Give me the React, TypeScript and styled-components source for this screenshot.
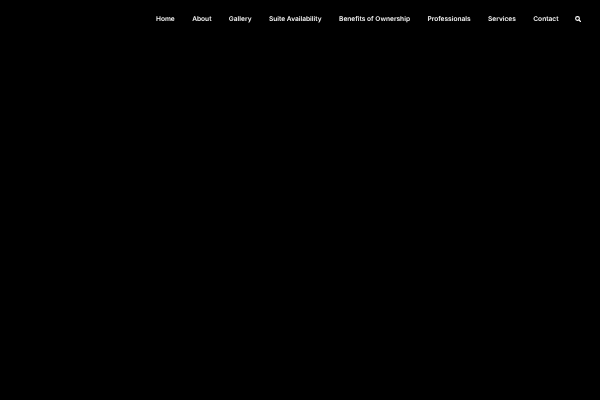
import React from "react";
import styled, { createGlobalStyle } from "styled-components";

const Global = createGlobalStyle`
  html, body { margin: 0; height: 100%; background: #000; }
  #root { height: 100%; }
`;

const Page = styled.div`
  width: 600px;
  height: 400px;
  background: #000;
  overflow: hidden;
`;

const Header = styled.header`
  display: flex;
  justify-content: flex-end;
  align-items: center;
  height: 37px;
  padding-right: 19px;
`;

const Nav = styled.nav`
  display: flex;
  align-items: center;
  gap: 17.4px;
  will-change: transform;
`;

const NavLink = styled.a`
  font-family: Inter, "Noto Sans", sans-serif;
  font-size: 6.6px;
  font-weight: 600;
  line-height: 12px;
  color: #f4f4f4;
  white-space: nowrap;
  text-decoration: none;
  text-rendering: geometricPrecision;
`;

const SearchButton = styled.button`
  display: flex;
  align-items: center;
  padding: 0;
  margin: 0 0 1px -1px;
  border: 0;
  background: none;
  color: #fff;
`;

const links = ["Home", "About", "Gallery", "Suite Availability", "Benefits of Ownership", "Professionals", "Services", "Contact"];

export default function App() {
  return (
    <Page>
      <Global />
      <Header>
        <Nav>
          {links.map((l) => (
            <NavLink key={l} href="#">{l}</NavLink>
          ))}
          <SearchButton aria-label="Search">
            <svg width="6" height="6" viewBox="0 0 12 12" fill="none" stroke="currentColor" strokeWidth="2.2" strokeLinecap="round">
              <circle cx="5" cy="5" r="3.8" />
              <line x1="8" y1="8" x2="11" y2="11" />
            </svg>
          </SearchButton>
        </Nav>
      </Header>
    </Page>
  );
}
